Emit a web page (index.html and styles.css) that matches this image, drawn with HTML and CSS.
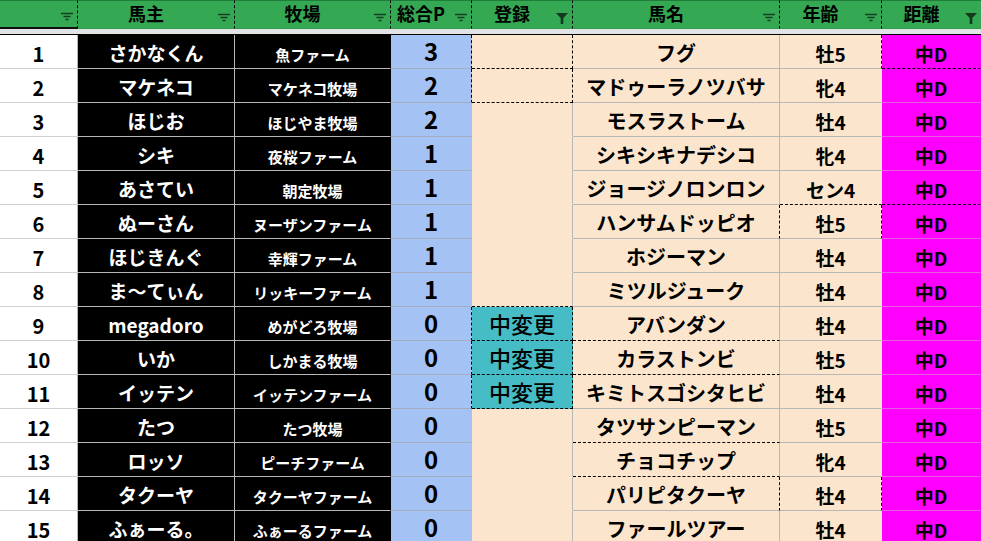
FILE: index.html
```html
<!DOCTYPE html>
<html lang="ja">
<head>
<meta charset="utf-8">
<title>馬主一覧</title>
<link rel="stylesheet" href="styles.css">
</head>
<body>
<div class="sheet">
  <div class="hd h0"><span class="ht"></span><span class="hi"><svg class="lines" width="12" height="9" viewBox="0 0 12 9"><path d="M0 1.5H12M2.5 4.5H9.5M4.5 7.5H7.5"/></svg></span></div>
  <div class="hd"><span class="ht">馬主</span><span class="hi"><svg class="lines" width="12" height="9" viewBox="0 0 12 9"><path d="M0 1.5H12M2.5 4.5H9.5M4.5 7.5H7.5"/></svg></span></div>
  <div class="hd"><span class="ht">牧場</span><span class="hi"><svg class="lines" width="12" height="9" viewBox="0 0 12 9"><path d="M0 1.5H12M2.5 4.5H9.5M4.5 7.5H7.5"/></svg></span></div>
  <div class="hd"><span class="ht">総合P</span><span class="hi"><svg class="lines" width="12" height="9" viewBox="0 0 12 9"><path d="M0 1.5H12M2.5 4.5H9.5M4.5 7.5H7.5"/></svg></span></div>
  <div class="hd"><span class="ht">登録</span><span class="hi"><svg class="funnel" width="12" height="11" viewBox="0 0 12 11"><path d="M0 0H12L7.3 5V11H4.7V5Z"/></svg></span></div>
  <div class="hd"><span class="ht">馬名</span><span class="hi"><svg class="lines" width="12" height="9" viewBox="0 0 12 9"><path d="M0 1.5H12M2.5 4.5H9.5M4.5 7.5H7.5"/></svg></span></div>
  <div class="hd"><span class="ht">年齢</span><span class="hi"><svg class="lines" width="12" height="9" viewBox="0 0 12 9"><path d="M0 1.5H12M2.5 4.5H9.5M4.5 7.5H7.5"/></svg></span></div>
  <div class="hd hlast"><span class="ht">距離</span><span class="hi"><svg class="funnel" width="12" height="11" viewBox="0 0 12 11"><path d="M0 0H12L7.3 5V11H4.7V5Z"/></svg></span></div>
  <div class="gap"></div>

  <div class="c c0">1</div><div class="c c1">さかなくん</div><div class="c c2">魚ファーム</div><div class="c c3 dr">3</div><div class="c c4 dr db"></div><div class="c c5">フグ</div><div class="c c6 dr">牡5</div><div class="c c7 db">中D</div>
  <div class="c c0">2</div><div class="c c1">マケネコ</div><div class="c c2">マケネコ牧場</div><div class="c c3 dr">2</div><div class="c c4 dr db"></div><div class="c c5">マドゥーラノツバサ</div><div class="c c6">牝4</div><div class="c c7">中D</div>
  <div class="c c0">3</div><div class="c c1">ほじお</div><div class="c c2">ほじやま牧場</div><div class="c c3">2</div><div class="c c4"></div><div class="c c5">モスラストーム</div><div class="c c6">牡4</div><div class="c c7">中D</div>
  <div class="c c0">4</div><div class="c c1">シキ</div><div class="c c2">夜桜ファーム</div><div class="c c3">1</div><div class="c c4"></div><div class="c c5">シキシキナデシコ</div><div class="c c6">牝4</div><div class="c c7">中D</div>
  <div class="c c0">5</div><div class="c c1">あさてい</div><div class="c c2">朝定牧場</div><div class="c c3">1</div><div class="c c4"></div><div class="c c5">ジョージノロンロン</div><div class="c c6 db">セン4</div><div class="c c7 db">中D</div>
  <div class="c c0">6</div><div class="c c1">ぬーさん</div><div class="c c2">ヌーザンファーム</div><div class="c c3">1</div><div class="c c4"></div><div class="c c5 dr">ハンサムドッピオ</div><div class="c c6 dr">牡5</div><div class="c c7">中D</div>
  <div class="c c0">7</div><div class="c c1">ほじきんぐ</div><div class="c c2">幸輝ファーム</div><div class="c c3">1</div><div class="c c4"></div><div class="c c5">ホジーマン</div><div class="c c6">牡4</div><div class="c c7">中D</div>
  <div class="c c0">8</div><div class="c c1">ま〜てぃん</div><div class="c c2">リッキーファーム</div><div class="c c3">1</div><div class="c c4 db"></div><div class="c c5">ミツルジューク</div><div class="c c6">牡4</div><div class="c c7">中D</div>
  <div class="c c0">9</div><div class="c c1">megadoro</div><div class="c c2">めがどろ牧場</div><div class="c c3 dr">0</div><div class="c c4 teal dr db">中変更</div><div class="c c5 db">アバンダン</div><div class="c c6">牡4</div><div class="c c7">中D</div>
  <div class="c c0">10</div><div class="c c1">いか</div><div class="c c2">しかまる牧場</div><div class="c c3 dr">0</div><div class="c c4 teal dr db">中変更</div><div class="c c5 db">カラストンビ</div><div class="c c6">牡5</div><div class="c c7">中D</div>
  <div class="c c0">11</div><div class="c c1">イッテン</div><div class="c c2">イッテンファーム</div><div class="c c3 dr">0</div><div class="c c4 teal dr db">中変更</div><div class="c c5">キミトスゴシタヒビ</div><div class="c c6">牡4</div><div class="c c7">中D</div>
  <div class="c c0">12</div><div class="c c1">たつ</div><div class="c c2">たつ牧場</div><div class="c c3">0</div><div class="c c4"></div><div class="c c5 db">タツサンピーマン</div><div class="c c6">牡5</div><div class="c c7">中D</div>
  <div class="c c0">13</div><div class="c c1">ロッソ</div><div class="c c2">ピーチファーム</div><div class="c c3">0</div><div class="c c4"></div><div class="c c5 db">チョコチップ</div><div class="c c6">牝4</div><div class="c c7">中D</div>
  <div class="c c0">14</div><div class="c c1">タクーヤ</div><div class="c c2">タクーヤファーム</div><div class="c c3">0</div><div class="c c4"></div><div class="c c5 dr">パリピタクーヤ</div><div class="c c6 dr">牡4</div><div class="c c7">中D</div>
  <div class="c c0">15</div><div class="c c1">ふぁーる。</div><div class="c c2">ふぁーるファーム</div><div class="c c3">0</div><div class="c c4"></div><div class="c c5">ファールツアー</div><div class="c c6">牡4</div><div class="c c7">中D</div>
</div>
</body>
</html>
```
FILE: styles.css
```css
html, body {
  margin: 0;
  padding: 0;
  background: #ffffff;
}
body {
  width: 981px;
  height: 541px;
  overflow: hidden;
  font-family: "Noto Sans CJK JP", "Noto Sans", sans-serif;
  font-weight: 700;
  color: #000;
}
.sheet {
  display: grid;
  grid-template-columns: 78px 157px 156px 81px 101px 207px 102px 99px;
  grid-template-rows: 29px 6px;
  grid-auto-rows: 34px;
}
.hd {
  box-sizing: border-box;
  background: #34a853;
  border-top: 1px solid #1f7d39;
  border-right: 1px dashed #000;
  border-bottom: 1px solid #2f9c4c;
  display: grid;
  grid-template-columns: 1fr 20px;
  font-size: 18px;
  line-height: 1.2;
}
.hd.h0 {
  border-bottom: 2px solid #111;
}
.hd.hlast {
  border-right: none;
}
.ht {
  display: flex;
  align-items: center;
  justify-content: center;
  padding-bottom: 2px;
}
.hi {
  display: flex;
  justify-content: flex-end;
  align-items: flex-end;
  padding-right: 4px;
  padding-bottom: 6px;
}
.hi .funnel {
  margin-bottom: -2px;
}
.lines path {
  stroke: #173d22;
  stroke-width: 1.3;
  fill: none;
}
.funnel path {
  fill: #143a1e;
}
.gap {
  grid-column: 1 / -1;
  background: #e1e3e6;
  border-bottom: 1px solid #000;
}
.c {
  box-sizing: border-box;
  display: flex;
  justify-content: center;
  align-items: flex-end;
  line-height: 1.2;
  white-space: nowrap;
  border-right: 1px solid transparent;
  border-bottom: 1px solid transparent;
}
.c0 {
  background: #fff;
  font-size: 20px;
  padding-bottom: 2px;
  border-right-color: #b7b7b7;
  border-bottom-color: #d0d0d0;
}
.c1 {
  background: #000;
  color: #fff;
  font-size: 19px;
  padding-bottom: 3px;
  border-right-color: #b7b7b7;
  border-bottom-color: #b7b7b7;
}
.c2 {
  background: #000;
  color: #fff;
  font-size: 15px;
  padding-bottom: 4px;
  border-right-color: #000;
  border-bottom-color: #b7b7b7;
}
.c3 {
  background: #a4c2f4;
  font-size: 24px;
  padding-bottom: 2px;
  border-right-color: #a4c2f4;
  border-bottom-color: #a3adbf;
}
.c4 {
  background: #fce5cd;
  font-size: 22px;
  font-weight: 500;
  padding-bottom: 4px;
  border-right-color: #b7b7b7;
  border-bottom-color: #fce5cd;
}
.c4.teal {
  background: #46bdc6;
}
.c5 {
  background: #fce5cd;
  font-size: 20px;
  padding-bottom: 3px;
  border-right-color: #b7b7b7;
  border-bottom-color: #b7b7b7;
}
.c6 {
  background: #fce5cd;
  font-size: 19px;
  padding-bottom: 2px;
  border-right-color: #fce5cd;
  border-bottom-color: #b7b7b7;
}
.c7 {
  background: #ff00ff;
  font-size: 19px;
  padding-bottom: 2px;
  border-bottom-color: #e65ce6;
}
.c.dr {
  border-right: 1px dashed #000;
}
.c.db {
  border-bottom: 1px dashed #000;
}
```
